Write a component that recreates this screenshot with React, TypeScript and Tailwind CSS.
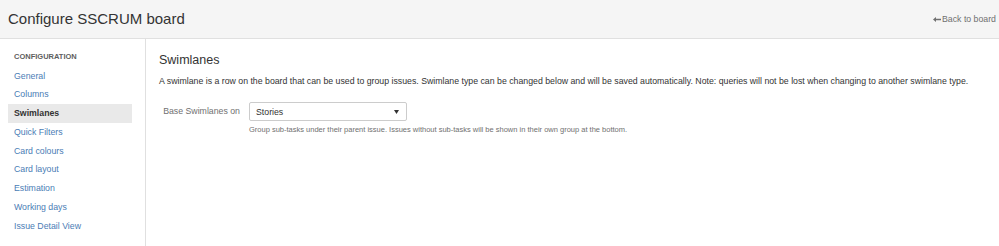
const navItems = [
  "General",
  "Columns",
  "Swimlanes",
  "Quick Filters",
  "Card colours",
  "Card layout",
  "Estimation",
  "Working days",
  "Issue Detail View",
];

export default function App() {
  return (
    <div className="w-[999px] h-[246px] overflow-hidden bg-white text-[#333] font-['Liberation_Sans',Arial,sans-serif] flex flex-col">
      {/* page header */}
      <header className="h-[39px] shrink-0 bg-[#f5f5f5] border-b border-[#e0e0e0] flex items-center justify-between pl-[8px] pr-[3px]">
        <h1 className="text-[15px] leading-[18px] text-[#333] font-normal">
          Configure SSCRUM board
        </h1>
        <a className="flex items-center gap-[1px] text-[8.75px] leading-[12px] text-[#707070] cursor-pointer">
          <svg width="8" height="5" viewBox="0 0 8 5" className="mt-[1px]">
            <path d="M0 2.5 L3 0 L3 1.7 L8 1.7 L8 3.3 L3 3.3 L3 5 Z" fill="#707070" />
          </svg>
          Back to board
        </a>
      </header>

      <div className="flex flex-1">
        {/* sidebar */}
        <nav className="w-[146px] shrink-0 border-r border-[#e0e0e0] pt-[12px] px-[8px]">
          <h2 className="h-[12px] leading-[12px] text-[7.5px] font-bold uppercase text-[#5e5e5e] pl-[6px] mb-[3.5px]">
            Configuration
          </h2>
          <ul>
            {navItems.map((item) => (
              <li
                key={item}
                className={
                  item === "Swimlanes"
                    ? "h-[18.75px] leading-[18.75px] text-[8.75px] pl-[6px] w-[124px] bg-[#e9e9e9] font-bold text-[#333]"
                    : "h-[18.75px] leading-[18.75px] text-[8.75px] pl-[6px] w-[124px] text-[#4a7db5]"
                }
              >
                {item}
              </li>
            ))}
          </ul>
        </nav>

        {/* content */}
        <main className="flex-1 pl-[13px] pt-[14px]">
          <h2 className="text-[12.5px] leading-[15px] font-normal text-[#333]">
            Swimlanes
          </h2>
          <p className="mt-[7px] text-[8.75px] leading-[12.5px] text-[#333]">
            A swimlane is a row on the board that can be used to group issues. Swimlane type can be
            changed below and will be saved automatically. Note: queries will not be lost when
            changing to another swimlane type.
          </p>

          <div className="mt-[14.5px] flex">
            <label className="w-[90px] pr-[9px] text-right text-[8.75px] leading-[19px] text-[#707070]">
              Base Swimlanes on
            </label>
            <div>
              <div className="w-[158px] h-[19px] border border-[#cccccc] rounded-[2px] bg-white flex items-center justify-between pl-[6px] pr-[7px]">
                <span className="text-[8.75px] leading-[12px] text-[#333]">Stories</span>
                <svg width="5" height="4" viewBox="0 0 5 4">
                  <path d="M0 0 L5 0 L2.5 4 Z" fill="#333" />
                </svg>
              </div>
              <p className="mt-[3px] text-[7.5px] leading-[11px] text-[#707070]">
                Group sub-tasks under their parent issue. Issues without sub-tasks will be shown in
                their own group at the bottom.
              </p>
            </div>
          </div>
        </main>
      </div>
    </div>
  );
}
